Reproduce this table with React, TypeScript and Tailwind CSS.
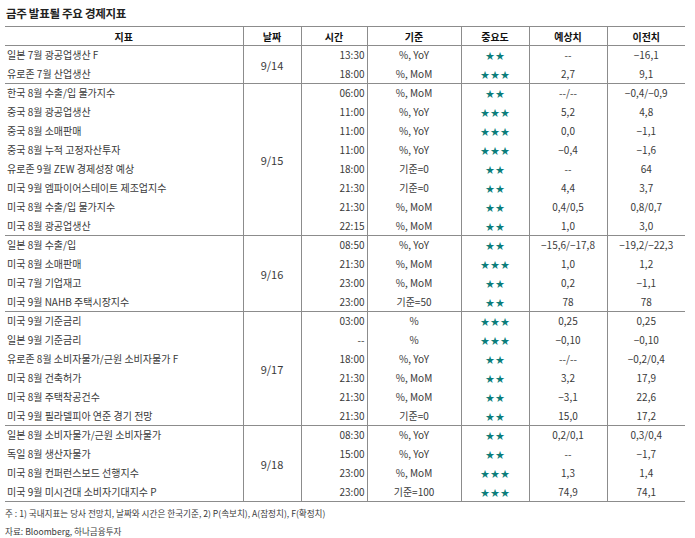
const groups = [
  {
    date: "9/14",
    rows: [
      ["일본 7월 광공업생산 F", "13:30", "%, YoY", 2, "--", "-16.1"],
      ["유로존 7월 산업생산", "18:00", "%, MoM", 3, "2.7", "9.1"],
    ],
  },
  {
    date: "9/15",
    rows: [
      ["한국 8월 수출/입 물가지수", "06:00", "%, MoM", 2, "--/--", "-0.4/-0.9"],
      ["중국 8월 광공업생산", "11:00", "%, YoY", 3, "5.2", "4.8"],
      ["중국 8월 소매판매", "11:00", "%, YoY", 3, "0.0", "-1.1"],
      ["중국 8월 누적 고정자산투자", "11:00", "%, YoY", 3, "-0.4", "-1.6"],
      ["유로존 9월 ZEW 경제성장 예상", "18:00", "기준=0", 2, "--", "64"],
      ["미국 9월 엠파이어스테이트 제조업지수", "21:30", "기준=0", 2, "4.4", "3.7"],
      ["미국 8월 수출/입 물가지수", "21:30", "%, MoM", 2, "0.4/0.5", "0.8/0.7"],
      ["미국 8월 광공업생산", "22:15", "%, MoM", 2, "1.0", "3.0"],
    ],
  },
  {
    date: "9/16",
    rows: [
      ["일본 8월 수출/입", "08:50", "%, YoY", 2, "-15.6/-17.8", "-19.2/-22.3"],
      ["미국 8월 소매판매", "21:30", "%, MoM", 3, "1.0", "1.2"],
      ["미국 7월 기업재고", "23:00", "%, MoM", 2, "0.2", "-1.1"],
      ["미국 9월 NAHB 주택시장지수", "23:00", "기준=50", 2, "78", "78"],
    ],
  },
  {
    date: "9/17",
    rows: [
      ["미국 9월 기준금리", "03:00", "%", 3, "0.25", "0.25"],
      ["일본 9월 기준금리", "--", "%", 3, "-0.10", "-0.10"],
      ["유로존 8월 소비자물가/근원 소비자물가 F", "18:00", "%, YoY", 2, "--/--", "-0.2/0.4"],
      ["미국 8월 건축허가", "21:30", "%, MoM", 2, "3.2", "17.9"],
      ["미국 8월 주택착공건수", "21:30", "%, MoM", 2, "-3.1", "22.6"],
      ["미국 9월 필라델피아 연준 경기 전망", "21:30", "기준=0", 2, "15.0", "17.2"],
    ],
  },
  {
    date: "9/18",
    rows: [
      ["일본 8월 소비자물가/근원 소비자물가", "08:30", "%, YoY", 2, "0.2/0.1", "0.3/0.4"],
      ["독일 8월 생산자물가", "15:00", "%, YoY", 2, "--", "-1.7"],
      ["미국 8월 컨퍼런스보드 선행지수", "23:00", "%, MoM", 3, "1.3", "1.4"],
      ["미국 9월 미시건대 소비자기대지수 P", "23:00", "기준=100", 3, "74.9", "74.1"],
    ],
  },
];

// reference uses real minus signs and comma decimals
const fix = (s: string) => s.replace(/-(?=\d)/g, "−").replace(/\./g, ",");

function Stars({ n }: { n: number }) {
  return (
    <span className="inline-flex gap-[1px] text-[#0b7d7a] text-[9px] leading-none">
      {Array.from({ length: n }).map((_, i) => (
        <span key={i}>★</span>
      ))}
    </span>
  );
}

export default function App() {
  return (
    <div className="w-[695px] h-[538px] bg-white text-[#3a3a3a] font-['Noto_Sans_CJK_KR',sans-serif] text-[10px]">
      <h1 className="pl-[6px] pt-[5px] h-[26px] font-bold text-[11.5px] text-[#222] leading-[16px] tracking-[-0.3px]">
        금주 발표될 주요 경제지표
      </h1>
      <table className="ml-[5px] w-[680px] table-fixed border-collapse">
        <colgroup>
          <col className="w-[238px]" />
          <col className="w-[58px]" />
          <col className="w-[66px]" />
          <col className="w-[94px]" />
          <col className="w-[68px]" />
          <col className="w-[78px]" />
          <col className="w-[78px]" />
        </colgroup>
        <thead>
          <tr className="h-[19px] border-y border-[#8c8c8c] text-[#111]">
            {["지표", "날짜", "시간", "기준", "중요도", "예상치", "이전치"].map((h, i) => (
              <th
                key={h}
                className={i > 0 ? "border-l border-[#8c8c8c] p-0 font-bold" : "p-0 font-bold"}
              >
                {h}
              </th>
            ))}
          </tr>
        </thead>
        <tbody>
          {groups.map((g) =>
            g.rows.map((r, i) => (
              <tr
                key={g.date + i}
                className={
                  i === g.rows.length - 1
                    ? "h-[19px] border-b border-[#8c8c8c] leading-[18px]"
                    : "h-[19px] leading-[18px]"
                }
              >
                <td className="p-0 pl-[2px] text-left whitespace-nowrap">{r[0]}</td>
                {i === 0 && (
                  <td rowSpan={g.rows.length} className="p-0 text-center border-l border-[#8c8c8c] text-[11px]">
                    {g.date}
                  </td>
                )}
                <td className="p-0 pr-[2px] text-right border-l border-[#8c8c8c]">{r[1]}</td>
                <td className="p-0 text-center border-l border-[#8c8c8c]">{r[2]}</td>
                <td className="p-0 text-center border-l border-[#8c8c8c]">
                  <Stars n={r[3] as number} />
                </td>
                <td className="p-0 text-center border-l border-[#8c8c8c]">{fix(r[4] as string)}</td>
                <td className="p-0 text-center border-l border-[#8c8c8c]">{fix(r[5] as string)}</td>
              </tr>
            ))
          )}
        </tbody>
      </table>
      <div className="pl-[5px] pt-[2px] text-[8.6px] leading-[18px]">
        <p>주 : 1) 국내지표는 당사 전망치, 날짜와 시간은 한국기준, 2) P(속보치), A(잠정치), F(확정치)</p>
        <p>자료: Bloomberg, 하나금융투자</p>
      </div>
    </div>
  );
}
